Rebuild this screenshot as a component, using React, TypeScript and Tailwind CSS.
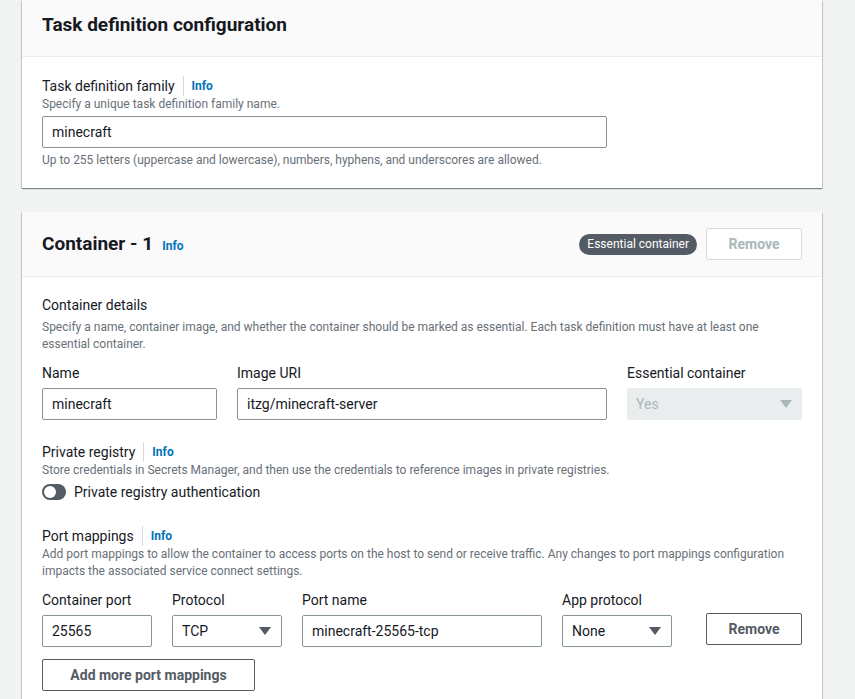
import React from "react"

const Caret = ({ color = "#545b64" }: { color?: string }) => (
  <svg width="12" height="8" viewBox="0 0 12 8">
    <path d="M0 0h12L6 8z" fill={color} />
  </svg>
)

const Info = ({ sep }: { sep?: boolean }) => (
  <span className="flex items-center">
    {sep && <span className="mx-[8px] h-[20px] w-px bg-[#d5dbdb]" />}
    <span className="text-[12px] font-bold text-[#0073bb]">Info</span>
  </span>
)

const TextInput = ({ value, w }: { value: string; w: string }) => (
  <div
    className={`${w} h-[32px] flex items-center px-[9px] border border-[#879596] rounded-[2px] bg-white text-[14px] text-[#16191f]`}
  >
    {value}
  </div>
)

const SelectBox = ({ value, w }: { value: string; w: string }) => (
  <div
    className={`${w} h-[32px] flex items-center justify-between pl-[9px] pr-[10px] border border-[#879596] rounded-[2px] bg-white text-[14px] text-[#16191f]`}
  >
    <span>{value}</span>
    <Caret />
  </div>
)

const Field = ({ label, children }: { label: string; children: React.ReactNode }) => (
  <div className="flex flex-col">
    <label className="text-[14px] leading-[20px] text-[#16191f]">{label}</label>
    <div className="mt-[5px]">{children}</div>
  </div>
)

const cardShadow =
  "shadow-[0_1px_1px_0_rgba(0,28,36,0.3),1px_1px_1px_0_rgba(0,28,36,0.15),-1px_1px_1px_0_rgba(0,28,36,0.15)]"

export default function App() {
  return (
    <div className="min-h-screen bg-[#f2f3f3] pl-[22px] font-[Roboto,sans-serif] overflow-hidden">
      <div className="w-[800px]">
        {/* task definition */}
        <div className={`bg-white ${cardShadow}`}>
          <div className="h-[57px] bg-[#fafafa] border-b border-[#eaeded] px-[20px] pt-[13px]">
            <h2 className="text-[19px] leading-[24px] font-bold text-[#16191f]">
              Task definition configuration
            </h2>
          </div>
          <div className="px-[20px] pt-[19px] pb-[20px]">
            <div className="flex items-center text-[14px] leading-[20px] text-[#16191f]">
              Task definition family
              <Info sep />
            </div>
            <p className="text-[12px] leading-[16px] text-[#687078]">
              Specify a unique task definition family name.
            </p>
            <div className="mt-[4px]">
              <TextInput value="minecraft" w="w-[565px]" />
            </div>
            <p className="mt-[4px] text-[12px] leading-[16px] text-[#687078]">
              Up to 255 letters (uppercase and lowercase), numbers, hyphens, and underscores are allowed.
            </p>
          </div>
        </div>

        {/* container */}
        <div className={`mt-[24px] bg-white ${cardShadow}`}>
          <div className="h-[65px] bg-[#fafafa] border-b border-[#eaeded] px-[20px] flex items-center justify-between">
            <div className="flex items-baseline gap-[9px]">
              <h2 className="text-[19px] leading-[24px] font-bold text-[#16191f]">Container - 1</h2>
              <span className="text-[12px] font-bold text-[#0073bb]">Info</span>
            </div>
            <div className="flex items-center gap-[9px]">
              <span className="h-[21px] px-[8px] flex items-center rounded-full bg-[#545b64] text-[12px] text-white">
                Essential container
              </span>
              <button className="w-[96px] h-[32px] border border-[#d5dbdb] rounded-[2px] bg-white text-[14px] font-bold text-[#aab7b8]">
                Remove
              </button>
            </div>
          </div>

          <div className="px-[20px] pt-[18px] pb-[20px]">
            <h3 className="text-[14px] leading-[20px] text-[#16191f]">Container details</h3>
            <p className="mt-[4px] text-[12px] leading-[17px] text-[#687078]">
              Specify a name, container image, and whether the container should be marked as essential. Each task definition must have at least one essential container.
            </p>

            <div className="mt-[10px] flex gap-[20px]">
              <Field label="Name">
                <TextInput value="minecraft" w="w-[175px]" />
              </Field>
              <Field label="Image URI">
                <TextInput value="itzg/minecraft-server" w="w-[370px]" />
              </Field>
              <Field label="Essential container">
                <div className="w-[175px] h-[32px] flex items-center justify-between pl-[9px] pr-[10px] rounded-[2px] bg-[#eaeded] text-[14px] text-[#aab7b8]">
                  <span>Yes</span>
                  <Caret color="#aab7b8" />
                </div>
              </Field>
            </div>

            <div className="mt-[22px] flex items-center text-[14px] leading-[20px] text-[#16191f]">
              Private registry
              <Info sep />
            </div>
            <p className="text-[12px] leading-[16px] text-[#687078]">
              Store credentials in Secrets Manager, and then use the credentials to reference images in private registries.
            </p>
            <div className="mt-[4px] h-[20px] flex items-center gap-[8px]">
              <span className="w-[24px] h-[16px] rounded-full bg-[#545b64] flex items-center pl-[2px]">
                <span className="w-[12px] h-[12px] rounded-full bg-white" />
              </span>
              <span className="text-[14px] text-[#16191f]">Private registry authentication</span>
            </div>

            <div className="mt-[24px] flex items-center text-[14px] leading-[18px] text-[#16191f]">
              Port mappings
              <Info sep />
            </div>
            <p className="text-[12px] leading-[17px] text-[#687078]">
              Add port mappings to allow the container to access ports on the host to send or receive traffic. Any changes to port mappings configuration impacts the associated service connect settings.
            </p>

            <div className="mt-[10px] flex gap-[20px]">
              <Field label="Container port">
                <TextInput value="25565" w="w-[110px]" />
              </Field>
              <Field label="Protocol">
                <SelectBox value="TCP" w="w-[110px]" />
              </Field>
              <Field label="Port name">
                <TextInput value="minecraft-25565-tcp" w="w-[240px]" />
              </Field>
              <Field label="App protocol">
                <SelectBox value="None" w="w-[110px]" />
              </Field>
              <button className="ml-auto mt-[23px] w-[96px] h-[32px] border border-[#545b64] rounded-[2px] bg-white text-[14px] font-bold text-[#545b64]">
                Remove
              </button>
            </div>

            <button className="mt-[12px] w-[213px] h-[32px] border border-[#545b64] rounded-[2px] bg-white text-[14px] font-bold text-[#545b64]">
              Add more port mappings
            </button>
          </div>
        </div>
      </div>
    </div>
  )
}
